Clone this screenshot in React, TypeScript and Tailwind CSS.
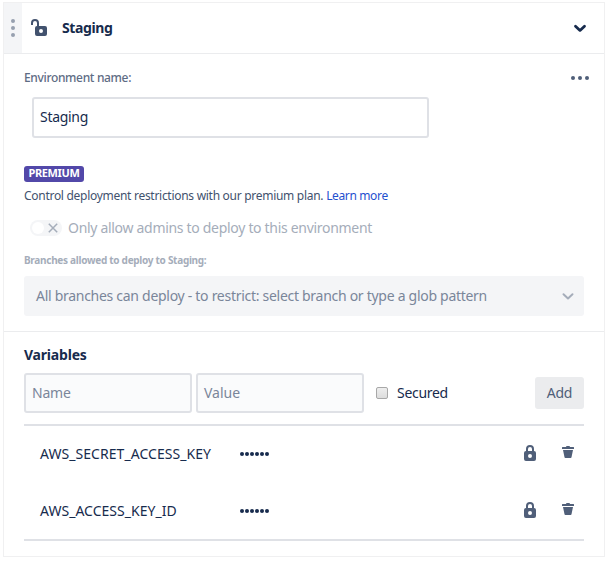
import React from "react";

function Lock() {
  return (
    <svg width="24" height="24" viewBox="0 0 24 24" className="mb-1 text-[#505f79]">
      <path
        fill="currentColor"
        fillRule="evenodd"
        d="M8 10V8a4 4 0 0 1 8 0v2a2 2 0 0 1 2 2v6a2 2 0 0 1-2 2H8a2 2 0 0 1-2-2v-6a2 2 0 0 1 2-2zm2 0h4V8a2 2 0 0 0-4 0v2zm2 3a2 2 0 1 0 0 4 2 2 0 0 0 0-4z"
      />
    </svg>
  );
}

function Unlock() {
  return (
    <svg width="24" height="24" viewBox="0 0 24 24" className="text-[#42526e]">
      <path d="M5 9V7a3 3 0 0 1 6 0v3" fill="none" stroke="currentColor" strokeWidth="2" />
      <path
        fill="currentColor"
        fillRule="evenodd"
        d="M10 10h8a2 2 0 0 1 2 2v6a2 2 0 0 1-2 2h-8a2 2 0 0 1-2-2v-6a2 2 0 0 1 2-2zm4 3a2 2 0 1 0 0 4 2 2 0 0 0 0-4z"
      />
    </svg>
  );
}

function Trash() {
  return (
    <svg width="24" height="24" viewBox="0 0 24 24" className="mb-[5px] text-[#505f79]">
      <path
        fill="currentColor"
        d="M7 10h10l-1.5 7.3a.9.9 0 0 1-.9.7H9.4a.9.9 0 0 1-.9-.7zM6 7.5A.5.5 0 0 1 6.500 7H10a1 1 0 0 1 1-1h2a1 1 0 0 1 1 1h3.500a.5.5 0 0 1 .5.5V9H6z"
      />
    </svg>
  );
}

function Chevron({ className }: { className: string }) {
  return (
    <svg width="24" height="24" viewBox="0 0 24 24" className={className}>
      <path d="M7.500 10.200 12 14.400l4.500-4.200" fill="none" stroke="currentColor" strokeLinecap="round" strokeLinejoin="round" />
    </svg>
  );
}

function Variable({ name, tracking }: { name: string; tracking: string }) {
  return (
    <div className="flex h-[57px] items-center pl-4 pr-1">
      <span className={`w-[200px] pb-[2px] ${tracking}`}>{name}</span>
      <span className="flex gap-px pb-[2px]">
        {[0, 1, 2, 3, 4, 5].map((i) => (
          <i key={i} className="size-1 rounded-full bg-[#172b4d]" />
        ))}
      </span>
      <span className="ml-auto flex items-end gap-[14px]">
        <Lock />
        <Trash />
      </span>
    </div>
  );
}

export default function App() {
  return (
    <div className="h-[562px] w-[610px] bg-white pl-[3px] pt-[2px] font-['Noto_Sans',sans-serif] text-[14px] leading-5 text-[#172b4d]">
      <section className="h-[555px] w-[602px] border border-[#f0f0f1]">
        <header className="flex h-[51px] items-center border-b border-[#ebecee]">
          <div className="flex h-full w-[18px] flex-col items-center justify-center gap-[3px] bg-[#f4f5f7] text-[#97a0af]">
            <i className="size-1 rounded-full bg-current" />
            <i className="size-1 rounded-full bg-current" />
            <i className="size-1 rounded-full bg-current" />
          </div>
          <div className="ml-[5px]"><Unlock /></div>
          <h2 className="ml-[11px] font-bold tracking-[-0.4px]">Staging</h2>
          <Chevron className="ml-auto mr-3 stroke-[2.8] text-[#172b4d]" />
        </header>

        <div className="h-[278px] border-b border-[#ebecee] px-5 pt-[14px]">
          <div className="flex h-5 items-center justify-between">
            <label className="text-[12px] font-medium tracking-[-0.34px] text-[#5e6c84]">Environment name:</label>
            <span className="-mr-[5px] flex gap-[3px] text-[#505f79]">
              <i className="size-1 rounded-full bg-current" />
              <i className="size-1 rounded-full bg-current" />
              <i className="size-1 rounded-full bg-current" />
            </span>
          </div>
          <div className="ml-2 mt-[9px] flex h-[41px] w-[397px] items-center rounded-[3px] border-2 border-[#dfe1e6] px-1.5">
            <span className="pb-[2px] tracking-[-0.3px]">Staging</span>
          </div>
          <div className="mt-7 flex h-4 w-[60px] items-center justify-center rounded-[3px] bg-[#5248a9] text-[11px] font-bold leading-4 text-white">
            <span className="pb-[2px] tracking-[-0.35px]">PREMIUM</span>
          </div>
          <p className="mt-1 whitespace-nowrap text-[12px] leading-5 tracking-[-0.285px] text-[#42526e]">
            <span>Control deployment restrictions with our premium plan.</span>{" "}
            <a className="tracking-[-0.36px] text-[#1f50cf]">Learn more</a>
          </p>
          <div className="mt-3 flex h-5 items-center pl-1.5 text-[#a5adba]">
            <div className="flex h-4 w-8 items-center justify-between rounded-full bg-[#f4f5f7] pl-[2px] pr-1">
              <i className="size-3 rounded-full bg-white" />
              <svg width="10" height="10" viewBox="0 0 10 10" className="text-[#a5adba]">
                <path d="M.8.8l8.400 8.400M9.200.8.8 9.200" stroke="currentColor" strokeWidth="1.500" />
              </svg>
            </div>
            <span className="ml-1.5 whitespace-nowrap tracking-[-0.305px]">Only allow admins to deploy to this environment</span>
          </div>
          <div className="mt-[14px] h-4 whitespace-nowrap text-[10px] font-bold leading-4 tracking-[-0.285px] text-[#a5adba]">Branches allowed to deploy to Staging:</div>
          <div className="mt-2 flex h-10 items-center justify-between rounded-[3px] bg-[#f4f5f7] pl-3 pr-1 text-[#7a869a]">
            <span className="whitespace-nowrap tracking-[-0.285px]">All branches can deploy - to restrict: select branch or type a glob pattern</span>
            <Chevron className="stroke-2 text-[#a5adba]" />
          </div>
        </div>

        <div className="px-5 pt-[13px]">
          <h3 className="font-bold tracking-[-0.2px]">Variables</h3>
          <div className="mt-2 flex h-10 items-center">
            <div className="flex h-10 w-[168px] items-center rounded-[3px] border-2 border-[#dfe1e6] bg-[#fafbfc] px-1.5 tracking-[-0.2px] text-[#7a869a]">Name</div>
            <div className="ml-1 flex h-10 w-[168px] items-center rounded-[3px] border-2 border-[#dfe1e6] bg-[#fafbfc] px-1.5 text-[#7a869a]">Value</div>
            <div className="ml-3 size-3 rounded-[2px] border border-[#a8a8a8] bg-linear-to-b from-[#eeeeee] to-[#dddddd]" />
            <span className="ml-[9px] tracking-[-0.3px]">Secured</span>
            <div className="ml-auto flex h-8 w-[49px] items-center justify-center rounded-[3px] bg-[#ebecee] tracking-[-0.2px] text-[#505f79]">Add</div>
          </div>
          <div className="mt-[11px] h-[117px] border-y-2 border-[#dfe1e6]">
            <Variable name="AWS_SECRET_ACCESS_KEY" tracking="tracking-[0.05px]" />
            <Variable name="AWS_ACCESS_KEY_ID" tracking="tracking-[0.02px]" />
          </div>
        </div>
      </section>
    </div>
  );
}
